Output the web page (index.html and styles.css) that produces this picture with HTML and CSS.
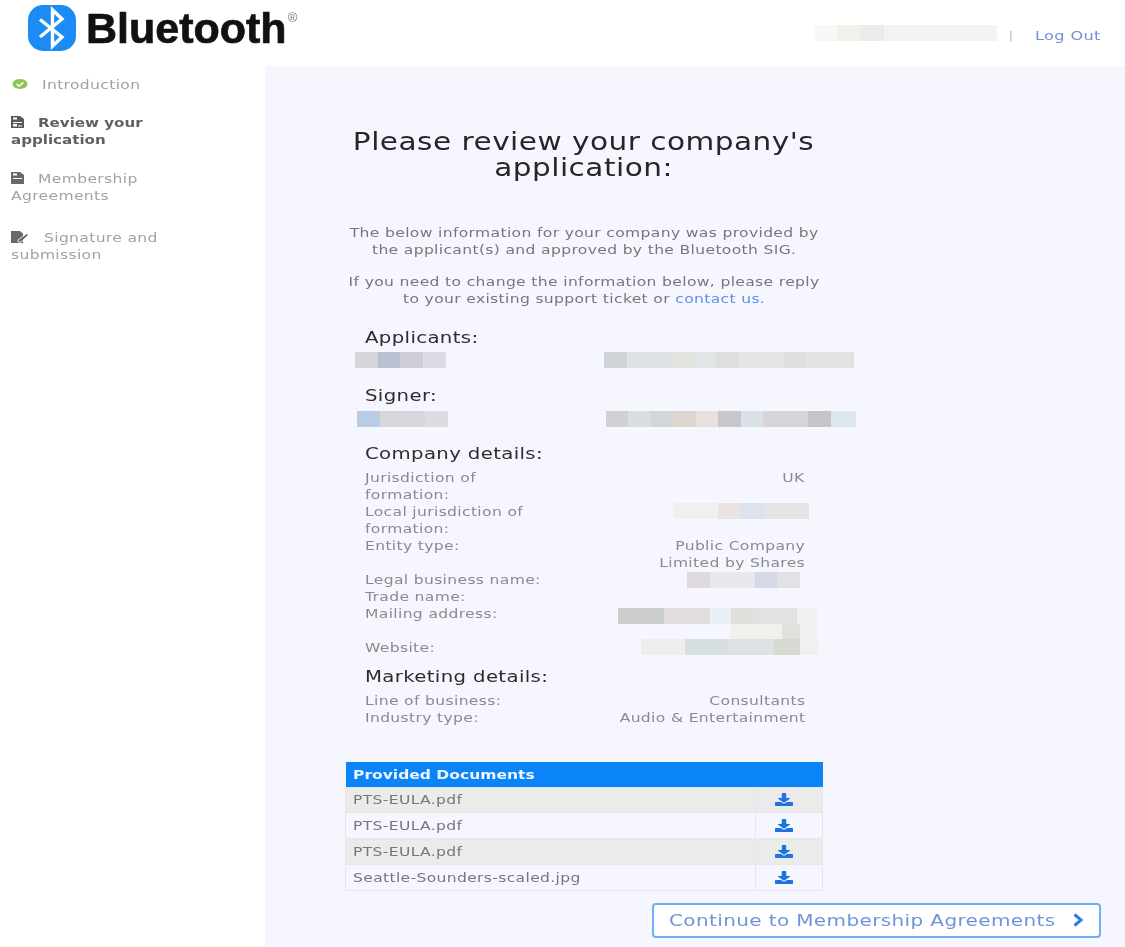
FILE: index.html
```html
<!DOCTYPE html>
<html lang="en">
<head>
<meta charset="utf-8">
<title>Review your application</title>
<link rel="stylesheet" href="styles.css">
</head>
<body>
<header class="top">
  <div class="brand">
    <svg class="brand-mark" viewBox="0 0 48 46" aria-hidden="true">
      <rect width="48" height="46" rx="15" fill="#1b8cf6"/>
      <path d="M12 14.5 34 32 24.5 41V5L34 14 12 32" fill="none" stroke="#fff" stroke-width="3.4"/>
    </svg>
    <span class="brand-name">Bluetooth</span><span class="brand-reg">®</span>
  </div>
  <div class="account">
    <span class="blur blur-user"></span>
    <span class="sep">|</span>
    <a class="logout" href="#"><span class="wide">Log Out</span></a>
  </div>
</header>
<div class="layout">
  <nav class="steps">
    <div class="step step-first">
      <svg class="check" viewBox="0 0 16 10" aria-hidden="true">
        <ellipse cx="8" cy="5" rx="7.5" ry="5" fill="#8cc653"/>
        <path d="M4.500 5 7 7l4.500-3.600" fill="none" stroke="#fff" stroke-width="1.600"/>
      </svg><span class="wide">Introduction</span>
    </div>
    <div class="step step-active step-review">
      <svg class="doc" viewBox="0 0 13 12" aria-hidden="true">
        <path d="M0 0h9l4 3v9H0z" fill="#55585c"/>
        <path d="M2 1.500h4v2H2zM2 6h9v1H2zM2 8h4v2.500H2zM7 9.500h4v1H7z" fill="#fff"/>
      </svg><span class="wide">Review your</span><br><span class="wide">application</span>
    </div>
    <div class="step step-member">
      <svg class="doc" viewBox="0 0 13 12" aria-hidden="true">
        <path d="M0 0h9l4 3v9H0z" fill="#66696d"/>
        <path d="M2 1.500h4v2H2zM2 6h9v1H2z" fill="#fff"/>
      </svg><span class="wide">Membership</span><br><span class="wide">Agreements</span>
    </div>
    <div class="step step-sign">
      <svg class="doc doc-sign" viewBox="0 0 18 12" aria-hidden="true">
        <path d="M0 0h9l3 2.500V12H0z" fill="#66696d"/>
        <path d="M7 9l9-6.500 1.500 1.500L10 11H7z" fill="#66696d" stroke="#fff" stroke-width=".8"/>
      </svg><span class="wide">Signature and</span><br><span class="wide">submission</span>
    </div>
  </nav>
  <main class="main">
    <div class="column">
      <h1 class="title"><span class="wide wide-c">Please review your company's<br>application:</span></h1>
      <p class="intro intro-first"><span class="wide wide-c">The below information for your company was provided by<br>the applicant(s) and approved by the Bluetooth SIG.</span></p>
      <p class="intro intro-second"><span class="wide wide-c">If you need to change the information below, please reply<br>to your existing support ticket or <a class="link" href="#">contact us.</a></span></p>

      <h2 class="section section-applicants"><span class="wide">Applicants:</span></h2>
      <div class="person">
        <span class="blur blur-name-a"></span>
        <span class="blur blur-mail-a"></span>
      </div>
      <h2 class="section section-signer"><span class="wide">Signer:</span></h2>
      <div class="person person-signer">
        <span class="blur blur-name-b"></span>
        <span class="blur blur-mail-b"></span>
      </div>

      <h2 class="section section-company"><span class="wide">Company details:</span></h2>
      <div class="details">
        <div class="label"><span class="wide">Jurisdiction of<br>formation:</span></div><div class="value"><span class="wide wide-r">UK</span></div>
        <div class="label"><span class="wide">Local jurisdiction of<br>formation:</span></div><div class="value"><span class="blur blur-local"></span></div>
        <div class="label"><span class="wide">Entity type:</span></div><div class="value"><span class="wide wide-r">Public Company<br>Limited by Shares</span></div>
        <div class="label"><span class="wide">Legal business name:</span></div><div class="value"><span class="blur blur-legal"></span></div>
        <div class="label"><span class="wide">Trade name:</span></div><div class="value"></div>
        <div class="label"><span class="wide">Mailing address:</span></div>
        <div class="value value-mail">
          <span class="blur blur-addr1"></span>
          <span class="blur blur-addr2"></span>
        </div>
        <div class="label"><span class="wide">Website:</span></div><div class="value"><span class="blur blur-web"></span></div>
      </div>

      <h2 class="section section-marketing"><span class="wide">Marketing details:</span></h2>
      <div class="details">
        <div class="label"><span class="wide">Line of business:</span></div><div class="value"><span class="wide wide-r">Consultants</span></div>
        <div class="label"><span class="wide">Industry type:</span></div><div class="value"><span class="wide wide-r">Audio &amp; Entertainment</span></div>
      </div>

      <table class="docs">
        <colgroup><col><col class="dl-col"></colgroup>
        <thead>
          <tr><th colspan="2"><span class="wide">Provided Documents</span></th></tr>
        </thead>
        <tbody>
          <tr><td><span class="wide">PTS-EULA.pdf</span></td><td class="dl"><svg class="dl-icon" viewBox="0 0 512 512" preserveAspectRatio="none" aria-hidden="true"><use href="#dl"/></svg></td></tr>
          <tr><td><span class="wide">PTS-EULA.pdf</span></td><td class="dl"><svg class="dl-icon" viewBox="0 0 512 512" preserveAspectRatio="none" aria-hidden="true"><use href="#dl"/></svg></td></tr>
          <tr><td><span class="wide">PTS-EULA.pdf</span></td><td class="dl"><svg class="dl-icon" viewBox="0 0 512 512" preserveAspectRatio="none" aria-hidden="true"><use href="#dl"/></svg></td></tr>
          <tr><td><span class="wide">Seattle-Sounders-scaled.jpg</span></td><td class="dl"><svg class="dl-icon" viewBox="0 0 512 512" preserveAspectRatio="none" aria-hidden="true"><use href="#dl"/></svg></td></tr>
        </tbody>
      </table>
    </div>
    <div class="actions">
      <a class="continue" href="#"><span class="wide">Continue to Membership Agreements</span>
        <svg class="chev" viewBox="0 0 12 14" aria-hidden="true"><path d="M2.500 1.500 9 7l-6.500 5.500" fill="none" stroke="#2b7fe6" stroke-width="3"/></svg>
      </a>
    </div>
  </main>
</div>
<svg class="defs" aria-hidden="true">
  <symbol id="dl" viewBox="0 0 512 512" preserveAspectRatio="none">
    <path d="M216 0h80c13.300 0 24 10.700 24 24v168h87.700c17.800 0 26.700 21.500 14.100 34.100L269.700 378.300c-7.500 7.500-19.800 7.500-27.300 0L90.100 226.100c-12.600-12.600-3.700-34.100 14.100-34.100H192V24c0-13.300 10.700-24 24-24zM512 376v112c0 13.300-10.700 24-24 24H24c-13.300 0-24-10.700-24-24V376c0-13.300 10.700-24 24-24h146.700l49 49c20.100 20.100 52.500 20.100 72.600 0l49-49H488c13.300 0 24 10.700 24 24z" fill="#1c74e0"/>
  </symbol>
</svg>
</body>
</html>
```
FILE: styles.css
```css
* { box-sizing: border-box; }
html, body { margin: 0; padding: 0; }
body {
  font-family: "DejaVu Sans", "Liberation Sans", sans-serif;
  font-size: 13px;
  line-height: 17px;
  letter-spacing: 0.3px;
  color: #8a8a8e;
  background: #fff;
  height: 947px;
  overflow: hidden;
  filter: blur(0.35px);
}
a { text-decoration: none; }
.defs { display: none; }

/* The reference type is a wide geometric face: widen the installed one */
.wide { display: inline-block; transform: scaleX(1.195); transform-origin: left center; }
.wide-c { transform-origin: center; }
.wide-r { transform-origin: right center; }

/* Header */
.top {
  height: 66px;
  display: flex;
  justify-content: space-between;
  align-items: flex-start;
}
.brand {
  display: flex;
  align-items: flex-start;
  padding: 5px 0 0 28px;
}
.brand-mark { width: 48px; height: 46px; flex: none; }
.brand-name {
  font-family: "Liberation Sans", Arial, sans-serif;
  font-weight: 700;
  font-size: 43px;
  line-height: 46px;
  letter-spacing: 0;
  color: #111;
  margin-left: 10px;
  -webkit-text-stroke: 0.7px #111;
}
.brand-reg {
  font-family: "Liberation Sans", Arial, sans-serif;
  font-size: 13px;
  line-height: 12px;
  letter-spacing: 0;
  color: #777;
  margin: 7px 0 0 1px;
}
.account {
  display: flex;
  align-items: flex-start;
  padding: 25px 24px 0 0;
}
.sep { margin: 2px 22px 0 12px; color: #aaa; font-size: 11px; }
.logout { display: block; width: 66px; margin-top: 2px; color: #6f8fd8; }
.logout .wide { transform: scaleX(1.24); }

/* Layout */
.layout { display: flex; height: 881px; }
.steps { width: 265px; flex: none; padding: 10px 0 0 11px; color: #a2a2a4; }
.step { line-height: 17px; }
.step-first { padding-left: 1px; }
.step-review { margin-top: 21px; font-weight: 700; color: #5f6064; letter-spacing: 0; }
.step-review .wide { transform: scaleX(1.16); }
.step-member { margin-top: 22px; }
.step-sign { margin-top: 25px; }
.check { width: 16px; height: 10px; margin-right: 14px; }
.doc { width: 13px; height: 12px; margin-right: 14px; vertical-align: -1px; }
.doc-sign { width: 18px; margin-right: 15px; }

.main { flex: 1; min-width: 0; background: #f6f6fe; padding: 63px 24px 0 80px; }
.column { width: 478px; }

.title {
  margin: 0;
  font-weight: 400;
  font-size: 24px;
  line-height: 26px;
  letter-spacing: 0.4px;
  color: #26262a;
  text-align: center;
}
.title .wide { transform: scaleX(1.23); }
.intro { margin: 0; text-align: center; color: #77777b; }
.intro-first { margin-top: 43px; }
.intro-second { margin-top: 15px; }
.link { color: #5a93e6; }

.section {
  margin: 0 0 0 20px;
  font-weight: 400;
  font-size: 16px;
  line-height: 20px;
  color: #2c2c30;
}
.section .wide { transform: scaleX(1.23); }
.section-applicants { margin-top: 21px; }
.section-signer { margin-top: 18px; }
.section-company { margin-top: 17px; }
.section-marketing { margin-top: 11px; }

.person {
  display: flex;
  justify-content: space-between;
  width: 499px;
  margin: 4px 0 0 10px;
}
.person-signer { margin-left: 12px; margin-top: 5px; }

.details {
  display: grid;
  grid-template-columns: 180px 1fr;
  margin: 5px 18px 0 20px;
}
.value { text-align: right; }
.value-mail { height: 34px; padding-top: 3px; }

/* Redacted mosaics */
.blur { display: block; height: 16px; }
.value .blur { margin-left: auto; }
.blur-user {
  width: 182px;
  background: linear-gradient(90deg, #f8f8f4 0 12%, #f1f1ec 12% 25%, #ebebe8 25% 38%, #f3f3f1 38%);
}
.blur-name-a {
  width: 91px;
  background: linear-gradient(90deg, #d4d5d6 0 25%, #b9c1d1 25% 50%, #d0cdd9 50% 75%, #dcdce4 75%);
}
.blur-mail-a {
  width: 250px;
  background: linear-gradient(90deg, #cfd2d6 0 9%, #dde3e4 9% 27%, #e2e2de 27% 36%, #e2e5e6 36% 45%, #dde0de 45% 54%, #e4e6e8 54% 72%, #dfdfdf 72% 81%, #e0e2e4 81%);
}
.blur-name-b {
  width: 91px;
  background: linear-gradient(90deg, #bacde6 0 25%, #d7d6dc 25% 75%, #dddce3 75%);
}
.blur-mail-b {
  width: 250px;
  background: linear-gradient(90deg, #cfd1d4 0 9%, #dadee0 9% 18%, #d3d6d8 18% 27%, #e1d6cf 27% 36%, #e8e0dd 36% 45%, #c5c7cb 45% 54%, #d8e1e5 54% 63%, #d6d6d8 63% 81%, #c7c3c6 81% 90%, #dde7ec 90%);
}
.blur-local {
  width: 136px;
  margin-right: -4px;
  background: linear-gradient(90deg, #eff0f1 0 33%, #e9e4e1 33% 50%, #dce3ec 50% 67%, #e4e4e6 67%);
}
.blur-legal {
  width: 113px;
  margin-top: 1px;
  margin-right: 5px;
  background: linear-gradient(90deg, #dfdae2 0 20%, #e6e8ec 20% 60%, #d5d8e6 60% 80%, #e2e1e6 80%);
}
.blur-addr1 {
  width: 199px;
  margin-right: -12px;
  background: linear-gradient(90deg, #cbccce 0 23%, #e2dddc 23% 46%, #e8f1f3 46% 57%, #dfe0dc 57% 68%, #e0e2e4 68% 90%, #f0f0f0 90%);
}
.blur-addr2 {
  width: 87px;
  height: 15px;
  margin-right: -12px;
  background: linear-gradient(90deg, #f0f1ed 0 60%, #dfe2db 60% 80%, #f0f0f0 80%);
}
.blur-web {
  width: 177px;
  margin-right: -13px;
  background: linear-gradient(90deg, #eeeeee 0 25%, #d8dfe0 25% 50%, #dfe2e2 50% 75%, #d7dad0 75% 90%, #f0f0f0 90%);
}

/* Documents table */
.docs {
  width: 478px;
  margin: 36px 0 0 0;
  border-collapse: collapse;
  table-layout: fixed;
}
.dl-col { width: 67px; }
.docs th {
  height: 25px;
  padding: 0 7px;
  background: #0a84f7;
  color: #eef6ff;
  text-align: left;
  font-weight: 700;
  letter-spacing: 0;
}
.docs td {
  height: 25.750px;
  padding: 0 7px;
  color: #77777b;
  border: 1px solid #e6e7ee;
}
.docs tbody tr:nth-child(odd) td { background: #ebebeb; }
.docs .dl { padding: 0; }
.dl-icon { display: block; width: 18px; height: 13px; margin: 0 0 0 19px; }

/* Action */
.actions { display: flex; justify-content: flex-end; margin-top: 12px; }
.continue {
  display: flex;
  align-items: center;
  justify-content: space-between;
  width: 449px;
  height: 35px;
  padding: 0 15px 0 15px;
  background: #fff;
  border: 2px solid #6db0f5;
  border-radius: 4px;
  color: #6f93dc;
  font-size: 16px;
}
.continue .wide { transform: scaleX(1.25); }
.chev { width: 12px; height: 14px; }
```
